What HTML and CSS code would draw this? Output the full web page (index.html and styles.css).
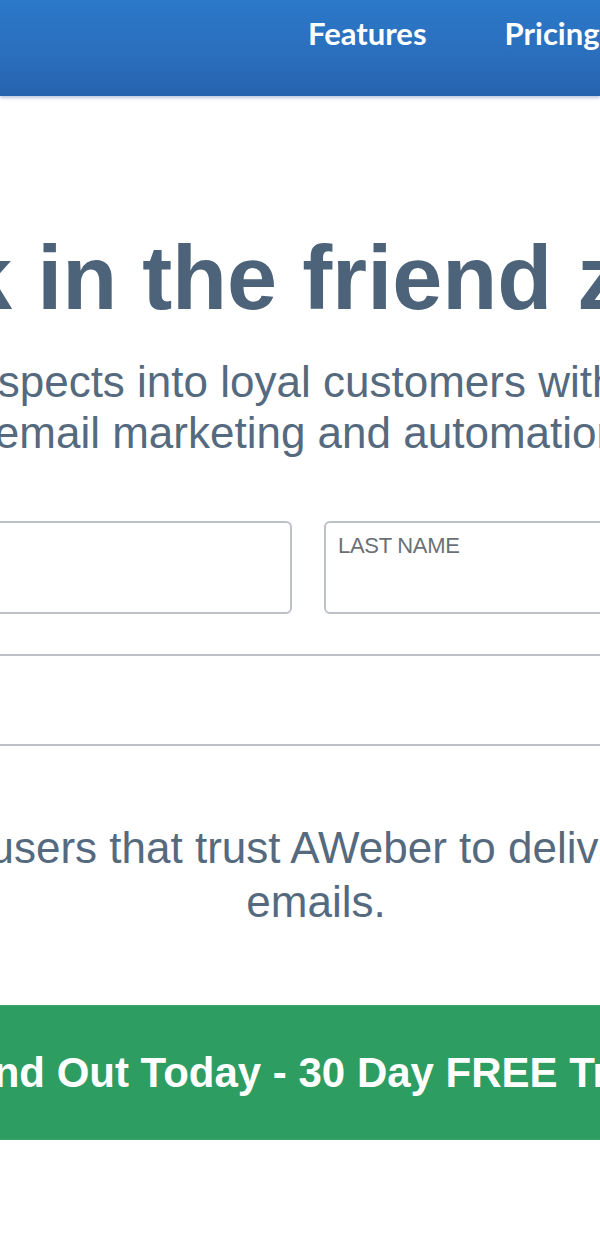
FILE: index.html
```html
<!DOCTYPE html>
<html lang="en">
<head>
<meta charset="utf-8">
<title>AWeber – Email Marketing</title>
<link rel="stylesheet" href="styles.css">
</head>
<body>
<div class="page">
  <header class="topbar">
    <nav class="nav">
      <a class="nav-link" href="#">Features</a>
      <a class="nav-link" href="#">Pricing</a>
      <a class="nav-link" href="#">Resources</a>
    </nav>
  </header>

  <main class="hero">
    <h1 class="title">Get stuck in the friend zone.</h1>

    <div class="stage">
      <p class="lead">Turn prospects into loyal customers with powerful<br>email marketing and automation.</p>

      <form class="signup">
        <div class="name-row">
          <label class="field">
            <span class="field-label">FIRST NAME</span>
            <input class="field-input" type="text" name="first">
          </label>
          <label class="field">
            <span class="field-label">LAST NAME</span>
            <input class="field-input" type="text" name="last">
          </label>
        </div>
        <label class="field field-wide">
          <span class="field-label">EMAIL ADDRESS</span>
          <input class="field-input" type="email" name="email">
        </label>
      </form>

      <p class="trust">Join users that trust AWeber to deliver their<br>emails.</p>

      <button class="cta" type="button"><span class="cta-text">Find Out Today - 30 Day FREE Trial</span></button>
    </div>
  </main>
</div>
</body>
</html>
```

FILE: styles.css
```css
* {
  box-sizing: border-box;
}

html,
body {
  margin: 0;
  padding: 0;
  background: #ffffff;
}

body {
  font-family: "Liberation Sans", Arial, sans-serif;
}

.page {
  width: 100%;
  min-height: 1240px;
  overflow: hidden;
}

/* ---------- Header ---------- */
.topbar {
  height: 96px;
  background: linear-gradient(to bottom, #2c78c9 0%, #2a6fbd 55%, #2663ae 100%);
  box-shadow: 0 2px 3px rgba(60, 100, 160, 0.35);
}

.nav {
  display: flex;
  align-items: flex-start;
  gap: 78px;
  padding: 15px 0 0 308px;
  white-space: nowrap;
}

.nav-link {
  font-family: Lato, "Open Sans", sans-serif;
  font-weight: 700;
  font-size: 31px;
  line-height: 1.2;
  color: #ffffff;
  text-decoration: none;
}

/* ---------- Hero ---------- */
.title {
  margin: 133px 0 0 -398px;
  font-size: 90px;
  line-height: 99px;
  font-weight: 700;
  color: #4c6379;
  white-space: nowrap;
}

.stage {
  width: 1400px;
  margin-left: -392px;
  text-align: center;
  white-space: nowrap;
}

.lead {
  margin: 28px 0 0;
  padding-left: 12px;
  font-size: 44px;
  line-height: 51px;
  color: #556a7e;
}

/* ---------- Form ---------- */
.signup {
  width: 1032px;
  margin: 63px auto 0;
  display: flex;
  flex-direction: column;
  gap: 40px;
  text-align: left;
}

.name-row {
  display: flex;
  gap: 32px;
}

.field {
  flex: 1;
  height: 93px;
  display: flex;
  flex-direction: column;
  padding: 10px 12px 0;
  border: 2px solid #bdc1c5;
  border-radius: 6px;
  background: #ffffff;
}

.field-wide {
  flex: none;
  height: 92px;
}

.field-label {
  font-size: 22px;
  color: #6c7075;
  letter-spacing: -0.3px;
}

.field-input {
  flex: 1;
  border: 0;
  outline: none;
  background: transparent;
  font: inherit;
}

/* ---------- Trust line ---------- */
.trust {
  margin: 75px 0 0;
  padding-left: 16px;
  font-size: 44px;
  line-height: 54px;
  color: #556a7e;
}

/* ---------- CTA ---------- */
.cta {
  display: flex;
  align-items: center;
  justify-content: center;
  width: 1032px;
  height: 135px;
  margin: 76px auto 0;
  padding: 0 4px 0 0;
  border: 1px solid #3aa56c;
  border-radius: 6px;
  background: #2e9d62;
  cursor: pointer;
}

.cta-text {
  font-family: "Liberation Sans", Arial, sans-serif;
  font-size: 42px;
  font-weight: 700;
  color: #ffffff;
  white-space: nowrap;
}
```
